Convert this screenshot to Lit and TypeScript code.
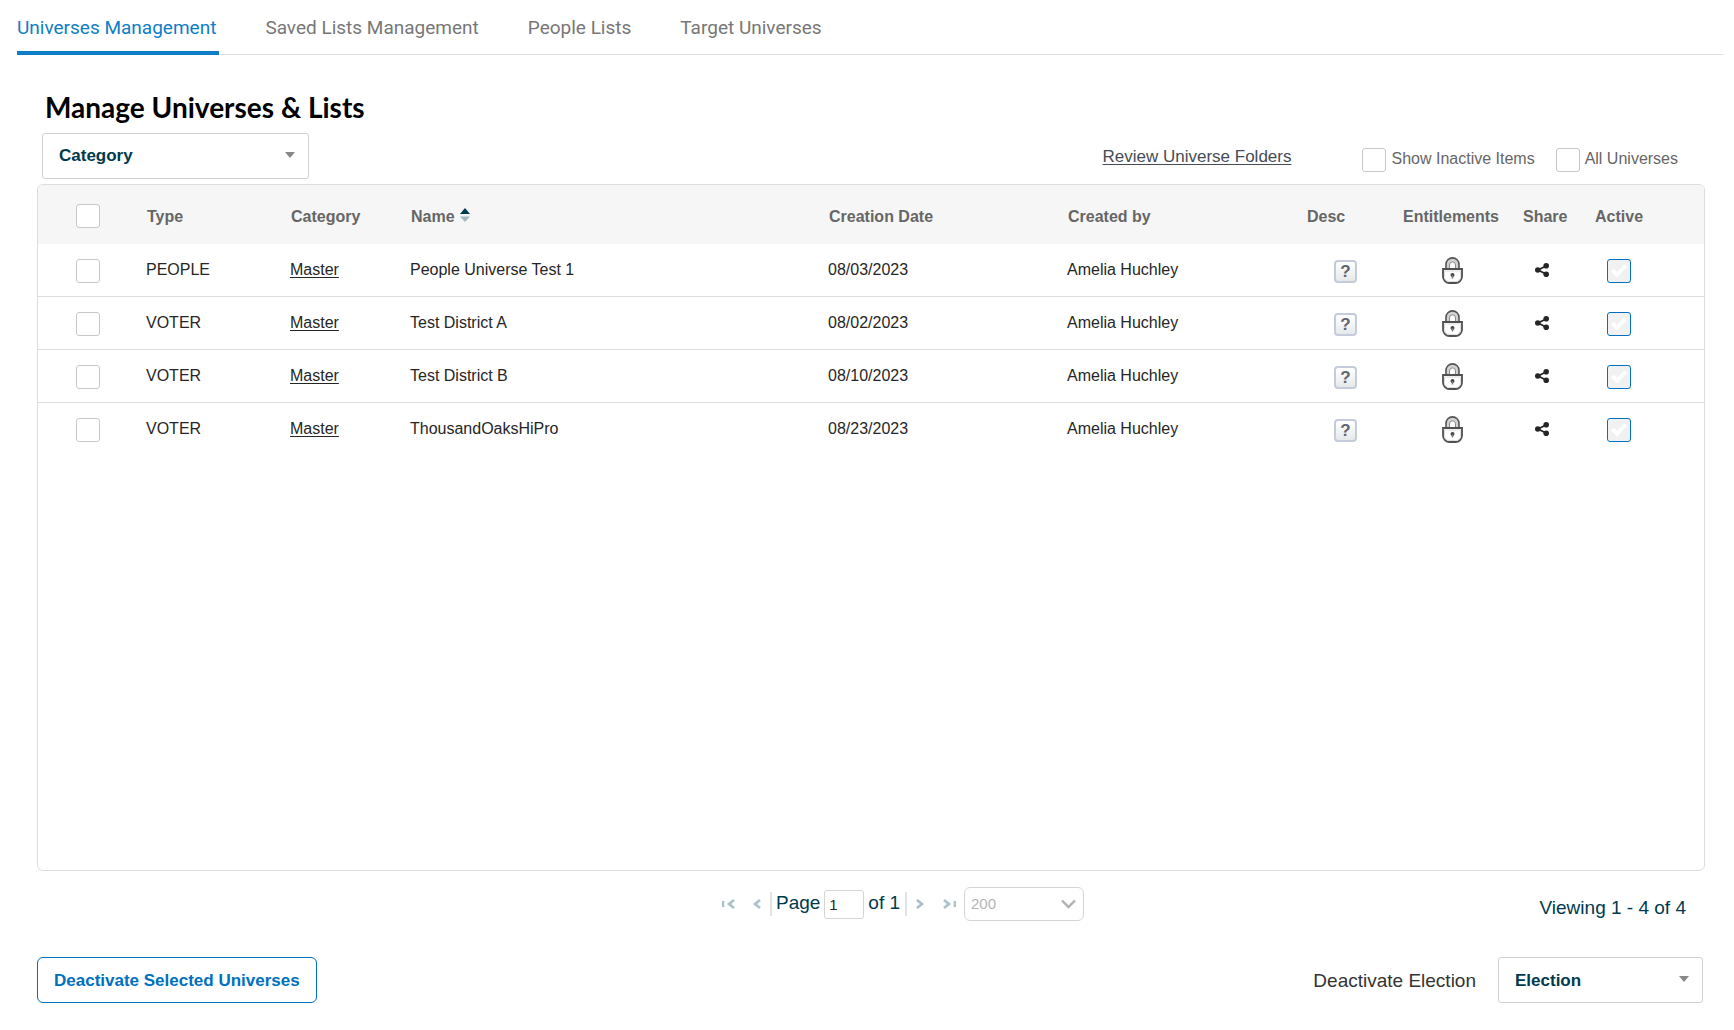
import { LitElement, html, css, svg } from "lit";
import { customElement, property, state } from "lit/decorators.js";

interface Universe {
  type: string;
  category: string;
  name: string;
  created: string;
  author: string;
}

const TABS = ["Universes Management", "Saved Lists Management", "People Lists", "Target Universes"];

const ROWS: Universe[] = [
  { type: "PEOPLE", category: "Master", name: "People Universe Test 1", created: "08/03/2023", author: "Amelia Huchley" },
  { type: "VOTER", category: "Master", name: "Test District A", created: "08/02/2023", author: "Amelia Huchley" },
  { type: "VOTER", category: "Master", name: "Test District B", created: "08/10/2023", author: "Amelia Huchley" },
  { type: "VOTER", category: "Master", name: "ThousandOaksHiPro", created: "08/23/2023", author: "Amelia Huchley" },
];

const controls = css`
  * {
    box-sizing: border-box;
  }
  button,
  input,
  select {
    font: inherit;
    color: inherit;
    margin: 0;
  }
  .box {
    appearance: none;
    display: grid;
    place-items: center;
    flex: none;
    width: 24px;
    height: 24px;
    border: 1px solid #c8c8c8;
    border-radius: 3px;
    background: #fff;
  }
  .box:checked {
    border-color: #0070c0;
    background: #f1f1f1;
  }
  .box:checked::before {
    content: "";
    width: 16px;
    height: 14px;
    background: #fff;
    clip-path: polygon(0 54%, 16% 34%, 38% 56%, 84% 2%, 100% 22%, 38% 96%);
  }
  .icon-button {
    display: block;
    padding: 0;
    border: 0;
    background: none;
    cursor: pointer;
  }
  .icon-button svg {
    display: block;
  }
`;

@customElement("tab-strip")
class TabStrip extends LitElement {
  @state() private current = 0;

  static styles = [
    controls,
    css`
      .tabs {
        display: flex;
        gap: 46px;
        margin: 0 11px 0 17px;
        border-bottom: 1px solid #ddd;
        font: 400 19px/24px Roboto, "Liberation Sans", sans-serif;
      }
      .tab {
        padding: 16px 3px 11px 0;
        margin-bottom: -1px;
        border: 0;
        border-bottom: 4px solid transparent;
        background: none;
        color: #777;
      }
      .current {
        color: #0f7dc7;
        border-color: #0f7dc7;
      }
    `,
  ];

  render() {
    return html`<nav class="tabs">
      ${TABS.map(
        (label, i) => html`<button class="tab ${i === this.current ? "current" : ""}" @click=${() => (this.current = i)}>${label}</button>`,
      )}
    </nav>`;
  }
}

@customElement("drop-down")
class DropDown extends LitElement {
  @property() label = "";
  @property() value = "";

  static styles = [
    controls,
    css`
      :host {
        display: block;
      }
      .field {
        display: grid;
        align-items: center;
      }
      .select {
        grid-area: 1 / 1;
        appearance: none;
        width: 100%;
        height: 46px;
        padding: 0 40px 0 16px;
        border: 1px solid #ccd2d8;
        border-radius: 3px;
        background: #fff;
        color: #003a4d;
        font-weight: bold;
        font-size: 17px;
      }
      .arrow {
        grid-area: 1 / 1;
        justify-self: end;
        margin: 0 14px 3px 0;
        pointer-events: none;
      }
    `,
  ];

  render() {
    return html`<div class="field">
      <select class="select" aria-label=${this.label}>
        <option>${this.value}</option>
      </select>
      <svg class="arrow" width="10" height="6" viewBox="0 0 10 6"><path d="M0 0h10L5 6z" fill="#888" /></svg>
    </div>`;
  }
}

@customElement("universe-table")
class UniverseTable extends LitElement {
  @property({ attribute: false }) rows: Universe[] = [];

  static styles = [
    controls,
    css`
      :host {
        display: block;
        border: 1px solid #ddd;
        border-radius: 6px;
        overflow: hidden;
      }
      .table {
        width: 100%;
        table-layout: fixed;
        border-collapse: separate;
        border-spacing: 0;
        font-size: 16px;
        line-height: 20px;
        color: #262626;
      }
      .check { width: 108px; }
      .type { width: 144px; }
      .category { width: 120px; }
      .created { width: 239px; }
      .author { width: 240px; }
      .desc { width: 96px; }
      .entitlements { width: 120px; }
      .share { width: 72px; }
      .active { width: 109px; }
      .head {
        height: 59px;
        padding: 4px 0 0 1px;
        background: #f6f6f6;
        color: #666;
        text-align: left;
        white-space: nowrap;
      }
      .head.flush {
        padding-left: 0;
      }
      .cell {
        height: 53px;
        padding: 0;
        border-bottom: 1px solid #ddd;
      }
      .row:last-child .cell {
        border-bottom-color: transparent;
      }
      .head.select,
      .cell.select {
        padding: 2px 0 0 38px;
      }
      .cell.hint { padding: 2px 0 0 27px; }
      .cell.lock { padding: 0 0 0 39px; }
      .cell.link { padding: 0 0 0 12px; }
      .cell.state { padding: 2px 0 0 12px; }
      .sort {
        display: flex;
        align-items: center;
        gap: 5px;
        padding: 0;
        border: 0;
        background: none;
      }
      .sort svg {
        margin-bottom: 4px;
      }
      .folder {
        color: #262626;
        text-underline-offset: 2px;
      }
      .help {
        width: 23px;
        height: 23px;
        border: 2px solid #c5cbdc;
        border-radius: 4px;
        background: linear-gradient(#fff, #e6e9ea);
        color: #62646f;
        font-size: 17px;
        font-weight: bold;
        line-height: 19px;
        text-align: center;
      }
    `,
  ];

  private lock() {
    return svg`<svg width="21" height="27" viewBox="0 0 21 27" fill="none">
      <path d="M4 12V7.400a6.500 6.500 0 0 1 13 0V12" fill="#d2d2d2" stroke="#555" stroke-width="1.600" />
      <path d="M7.500 12V8a3 3.200 0 0 1 6 0v4z" fill="#fff" stroke="#8a8a8a" />
      <path d="M1 12h19v7.500a6.500 6.500 0 0 1-6.500 6.500h-6A6.500 6.500 0 0 1 1 19.500z" fill="#fff" stroke="#505050" stroke-width="1.800" />
      <path d="M2.500 14h16M2.500 14v5.500a5 5 0 0 0 5 5h6a5 5 0 0 0 5-5V14" stroke="#ddd" />
      <circle cx="10.500" cy="18" r="2" fill="#444" />
      <path d="M10.500 18v3.500" stroke="#777" stroke-width="1.500" />
    </svg>`;
  }

  private shareIcon() {
    return svg`<svg width="14" height="14" viewBox="0 0 14 14" fill="#262626">
      <path d="M11 3L3 7l8 4" fill="none" stroke="#262626" stroke-width="1.800" />
      <circle cx="11.200" cy="2.800" r="2.800" /><circle cx="2.800" cy="7" r="2.800" /><circle cx="11.200" cy="11.200" r="2.800" />
    </svg>`;
  }

  render() {
    return html`<table class="table">
      <colgroup>
        <col class="check" /><col class="type" /><col class="category" /><col /><col class="created" />
        <col class="author" /><col class="desc" /><col class="entitlements" /><col class="share" /><col class="active" />
      </colgroup>
      <thead>
        <tr>
          <th class="head select"><input class="box" type="checkbox" aria-label="Select all" /></th>
          <th class="head">Type</th>
          <th class="head">Category</th>
          <th class="head">
            <button class="sort">
              Name
              <svg width="10" height="14" viewBox="0 0 10 14">
                <path d="M0 6h10L5 0z" fill="#003a4d" />
                <path d="M0 8.500h10l-5 5.500z" fill="#a5b6bd" />
              </svg>
            </button>
          </th>
          <th class="head">Creation Date</th>
          <th class="head">Created by</th>
          <th class="head flush">Desc</th>
          <th class="head flush">Entitlements</th>
          <th class="head flush">Share</th>
          <th class="head flush">Active</th>
        </tr>
      </thead>
      <tbody>
        ${this.rows.map(
          (r) => html`<tr class="row">
            <td class="cell select"><input class="box" type="checkbox" aria-label="Select ${r.name}" /></td>
            <td class="cell">${r.type}</td>
            <td class="cell"><a class="folder" href="#">${r.category}</a></td>
            <td class="cell">${r.name}</td>
            <td class="cell">${r.created}</td>
            <td class="cell">${r.author}</td>
            <td class="cell hint"><button class="icon-button help">?</button></td>
            <td class="cell lock"><button class="icon-button" aria-label="Entitlements">${this.lock()}</button></td>
            <td class="cell link"><button class="icon-button" aria-label="Share">${this.shareIcon()}</button></td>
            <td class="cell state"><input class="box" type="checkbox" checked disabled aria-label="Active" /></td>
          </tr>`,
        )}
      </tbody>
    </table>`;
  }
}

@customElement("list-pager")
class ListPager extends LitElement {
  @property({ type: Number }) total = 0;

  static styles = [
    controls,
    css`
      .bar {
        display: grid;
        grid-template-columns: 1fr auto 1fr;
        align-items: center;
        padding-left: 64px;
        color: #003a4d;
        font-size: 19px;
        line-height: 24px;
      }
      .pager {
        grid-column: 2;
        display: flex;
        align-items: center;
      }
      .prev { margin: 0 9px 0 18px; }
      .next { margin: 0 19px 0 9px; }
      .pages {
        display: flex;
        align-items: center;
        gap: 4px;
        height: 24px;
        padding: 0 5px 0 4px;
        border: solid #e3e3e3;
        border-width: 0 2px;
      }
      .word {
        margin-bottom: 3px;
      }
      .number {
        width: 40px;
        height: 29px;
        padding: 0 4px;
        border: 1px solid #d5d5d5;
        border-radius: 3px;
        color: #262626;
        font-size: 15px;
      }
      .size {
        display: grid;
        align-items: center;
        margin-left: 8px;
      }
      .size-select {
        grid-area: 1 / 1;
        appearance: none;
        width: 120px;
        height: 34px;
        padding: 0 6px;
        border: 1px solid #d5d5d5;
        border-radius: 6px;
        background: #fff;
        color: #b5b5b5;
        opacity: 1;
        font-size: 15px;
      }
      .chevron {
        grid-area: 1 / 1;
        justify-self: end;
        margin-right: 8px;
      }
      .summary {
        justify-self: end;
        margin: 7px 19px 0 0;
      }
    `,
  ];

  private arrow(label: string, cls: string, width: number, d: string) {
    return html`<button class="icon-button ${cls}" aria-label=${label}>
      <svg width=${width} height="10" viewBox="0 0 ${width} 10" fill="none" stroke="#a9c0c8" stroke-width="2.600"><path d=${d} /></svg>
    </button>`;
  }

  render() {
    return html`<div class="bar">
      <div class="pager">
        ${this.arrow("First page", "first", 13, "M1 2v6M12 1L7 5l5 4")}
        ${this.arrow("Previous page", "prev", 8, "M7 1L2 5l5 4")}
        <label class="pages">
          <span class="word">Page</span>
          <input class="number" type="text" value="1" />
          <span class="word">of 1</span>
        </label>
        ${this.arrow("Next page", "next", 8, "M1 1l5 4-5 4")}
        ${this.arrow("Last page", "last", 13, "M1 1l5 4-5 4M12 2v6")}
        <div class="size">
          <select class="size-select" disabled aria-label="Rows per page"><option>200</option></select>
          <svg class="chevron" width="15" height="10" viewBox="0 0 15 10"><path d="M1 1.500l6.500 6.500L14 1.500" fill="none" stroke="#b0b0b0" stroke-width="2.400" /></svg>
        </div>
      </div>
      <div class="summary">Viewing 1 - ${this.total} of ${this.total}</div>
    </div>`;
  }
}

@customElement("app-root")
class AppRoot extends LitElement {
  static styles = [
    controls,
    css`
      :host {
        display: flex;
        flex-direction: column;
        min-height: 100vh;
        background: #fff;
        font-family: "Liberation Sans", Arial, sans-serif;
      }
      .main {
        flex: 1;
        display: flex;
        flex-direction: column;
        padding: 34px 29px 27px 37px;
      }
      .title {
        margin: 0 0 8px 8px;
        font: bold 28px/36px Lato, "Noto Sans", sans-serif;
        color: #000;
      }
      .filters {
        display: flex;
        align-items: center;
        padding: 0 27px 5px 5px;
        font-size: 16px;
        line-height: 20px;
        color: #666;
      }
      .category {
        width: 267px;
        margin-right: auto;
      }
      .review {
        margin: 2px 71px 0 0;
        color: #454c55;
        font-size: 17px;
        text-underline-offset: 2px;
      }
      .option {
        display: flex;
        align-items: center;
        gap: 5px;
        margin-top: 8px;
      }
      .option-text {
        margin-bottom: 2px;
      }
      .option + .option {
        margin-left: 21px;
      }
      .list {
        flex: 1;
      }
      .pager {
        margin: 16px 0 36px;
      }
      .actions {
        display: flex;
        align-items: center;
        justify-content: space-between;
        padding-right: 2px;
      }
      .deactivate {
        height: 46px;
        padding: 1px 16px 0;
        border: 1px solid #0070c0;
        border-radius: 6px;
        background: #fff;
        color: #0070c0;
        font-weight: bold;
        font-size: 17px;
      }
      .election {
        display: flex;
        align-items: center;
        gap: 22px;
        color: #333;
        font-size: 19px;
      }
      .election-text {
        margin-top: 2px;
      }
      .election-select {
        width: 205px;
      }
    `,
  ];

  render() {
    return html`
      <tab-strip></tab-strip>
      <main class="main">
        <h1 class="title">Manage Universes &amp; Lists</h1>
        <div class="filters">
          <drop-down class="category" label="Category" value="Category"></drop-down>
          <a class="review" href="#">Review Universe Folders</a>
          <label class="option"><input class="box" type="checkbox" /><span class="option-text">Show Inactive Items</span></label>
          <label class="option"><input class="box" type="checkbox" /><span class="option-text">All Universes</span></label>
        </div>
        <universe-table class="list" .rows=${ROWS}></universe-table>
        <list-pager class="pager" .total=${ROWS.length}></list-pager>
        <div class="actions">
          <button class="deactivate">Deactivate Selected Universes</button>
          <div class="election">
            <span class="election-text">Deactivate Election</span>
            <drop-down class="election-select" label="Deactivate Election" value="Election"></drop-down>
          </div>
        </div>
      </main>
    `;
  }
}
